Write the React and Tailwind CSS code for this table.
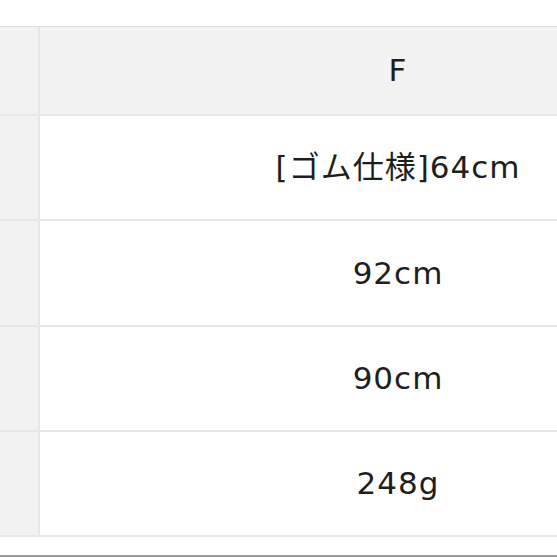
import React from 'react';

const rows = [
  { value: '[ゴム仕様]64cm', h: 'h-[103px]' },
  { value: '92cm', h: 'h-[104px]' },
  { value: '90cm', h: 'h-[103px]' },
  { value: '248g', h: 'h-[103px]' },
];

const App = () => {
  return (
    <div
      className="w-[557px] h-[557px] bg-white overflow-hidden flex flex-col"
      style={{ fontFamily: '"DejaVu Sans", "Noto Sans CJK JP", sans-serif' }}
    >
      <div className="h-[26px] shrink-0" />

      <div className="w-[756px] border-t border-[#e0e0e0] shrink-0">
        {/* size header */}
        <div className="grid grid-cols-[40px_1fr] h-[89px] border-b-2 border-[#e7e7e7] bg-[#f2f2f2]">
          <div className="border-r-2 border-[#e6e6e6]" />
          <div className="flex items-center justify-center text-[31px] tracking-[1px] text-[#1e1e1e]">F</div>
        </div>

        {rows.map((row) => (
          <div
            key={row.value}
            className={`grid grid-cols-[40px_1fr] border-b-2 border-[#e7e7e7] box-content ${row.h}`}
          >
            <div className="bg-[#f2f2f2] border-r-2 border-[#e6e6e6]" />
            <div className="bg-white flex items-center justify-center text-[31px] tracking-[1px] text-[#1e1e1e]">
              {row.value}
            </div>
          </div>
        ))}
      </div>

      <div className="h-[18px] shrink-0" />
      <div className="h-[2px] bg-[#9c9c9c] shrink-0" />
    </div>
  );
};

export default App;
